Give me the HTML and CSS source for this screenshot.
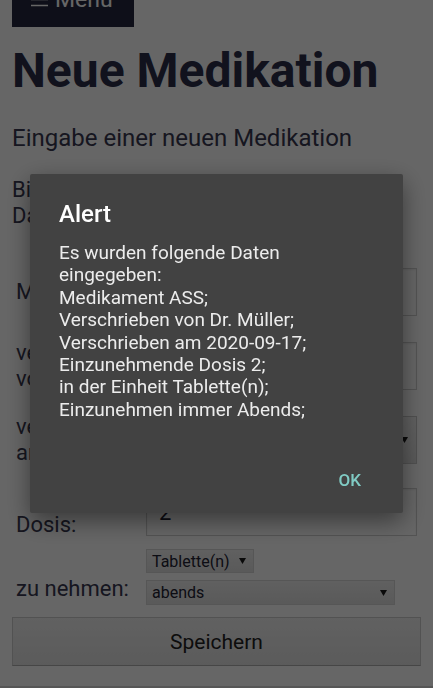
FILE: index.html
```html
<!DOCTYPE html>
<html lang="de">
<head>
<meta charset="utf-8">
<title>Neue Medikation</title>
<link rel="stylesheet" href="styles.css">
</head>
<body>
<div class="page">
  <button class="menu-btn" type="button"><svg class="burger" width="17" height="15" viewBox="0 0 17 15"><path d="M0 1.5H17M0 7.5H17M0 13.5H17" stroke="currentColor" stroke-width="1.6"/></svg>Menu</button>
  <h1 class="title">Neue Medikation</h1>
  <p class="sub">Eingabe einer neuen Medikation</p>
  <p class="intro">Bitte tragen Sie hier alle erforderlichen Daten der neuen Medikation ein.</p>
  <form class="form">
    <label class="lbl">Medikament:</label>
    <input class="text" type="text" value="ASS">
    <label class="lbl">verschrieben von:</label>
    <input class="text" type="text" value="Dr. Müller">
    <label class="lbl">verschrieben am:</label>
    <div class="datebox"><span>2020-09-17</span><svg class="arrow" width="7" height="6" viewBox="0 0 7 6"><path d="M0 0H7L3.5 6Z" fill="currentColor"/></svg></div>
    <label class="lbl lbl-dosis">Dosis:</label>
    <div class="dosis">
      <input class="text text-dosis" type="text" value="2">
      <div class="sel sel-unit"><select><option>Tablette(n)</option></select><svg class="arrow" width="7" height="6" viewBox="0 0 7 6"><path d="M0 0H7L3.5 6Z" fill="currentColor"/></svg></div>
    </div>
    <label class="lbl">zu nehmen:</label>
    <div class="sel sel-time"><select><option>abends</option></select><svg class="arrow" width="7" height="6" viewBox="0 0 7 6"><path d="M0 0H7L3.5 6Z" fill="currentColor"/></svg></div>
  </form>
  <button class="save" type="button">Speichern</button>
  <div class="bottom-line"></div>
</div>

<div class="scrim"></div>
<div class="dialog" role="alertdialog">
  <div class="dlg-title">Alert</div>
  <div class="dlg-msg">Es wurden folgende Daten<br>eingegeben:<br>Medikament ASS;<br>Verschrieben von Dr. Müller;<br>Verschrieben am 2020-09-17;<br>Einzunehmende Dosis 2;<br>in der Einheit Tablette(n);<br>Einzunehmen immer Abends;</div>
  <div class="dlg-actions"><button class="dlg-ok" type="button">OK</button></div>
</div>
</body>
</html>
```
FILE: styles.css
```css
html, body {
  margin: 0;
  padding: 0;
  background: #ffffff;
  font-family: Roboto, "Noto Sans", "Liberation Sans", sans-serif;
  color: #383850;
  overflow: hidden;
}

.page {
  padding: 0 12px;
}

.menu-btn {
  display: block;
  width: 122px;
  margin: -28px 0 0 0;
  padding: 14px 0 14px 19px;
  border: none;
  background: #25273f;
  color: #ffffff;
  font-family: inherit;
  font-size: 23px;
  line-height: 27px;
  text-align: left;
}

.burger {
  vertical-align: baseline;
  margin-right: 7px;
}

.title {
  margin: 16px 0 0 0;
  font-size: 48px;
  line-height: 56px;
  font-weight: 700;
  color: #2c2d4a;
}

.sub {
  margin: 25px 0 0 0;
  font-size: 24px;
  line-height: 28px;
}

.intro {
  margin: 25px 0 0 0;
  font-size: 22px;
  line-height: 26px;
}

.form {
  display: grid;
  grid-template-columns: 134px 271px;
  align-items: center;
  margin-top: 26px;
}

.lbl {
  padding-left: 4px;
  font-size: 22px;
  line-height: 25.8px;
}

.text {
  box-sizing: border-box;
  width: 271px;
  height: 48px;
  margin: 13px 0;
  padding: 0 12px;
  border: 1px solid #cfcfcf;
  background: #ffffff;
  box-shadow: inset 0 1px 2px rgba(0, 0, 0, 0.08);
  font-family: inherit;
  font-size: 22px;
  color: #222233;
}

.datebox {
  box-sizing: border-box;
  height: 48px;
  margin: 13px 0;
  padding: 0 8px 0 12px;
  display: flex;
  align-items: center;
  justify-content: space-between;
  border: 1px solid #c9c9c9;
  background: linear-gradient(#f1f1f1, #dedede);
  font-size: 22px;
  color: #222233;
}

.dosis {
  display: flex;
  flex-direction: column;
  align-items: flex-start;
}

.text-dosis {
  margin: 11px 0 0 0;
}

.sel {
  box-sizing: border-box;
  display: flex;
  align-items: center;
  height: 25px;
  padding-right: 7px;
  border: 1px solid #d6d6d6;
  background: linear-gradient(#f0f0f0, #e0e0e0);
  color: #222233;
}

.sel select {
  flex: 1;
  appearance: none;
  -webkit-appearance: none;
  border: none;
  background: transparent;
  padding: 0 0 0 5px;
  font-family: inherit;
  font-size: 16px;
  color: #222233;
}

.sel-unit {
  width: 108px;
  height: 24px;
  margin-top: 13px;
}

.sel-time {
  width: 249px;
  margin-top: 7px;
}

.arrow {
  flex: none;
  color: #1a1a1a;
}

.save {
  box-sizing: border-box;
  display: block;
  width: 409px;
  height: 49px;
  margin-top: 12px;
  border: 1px solid #cccccc;
  border-bottom-color: #b0b0b0;
  background: linear-gradient(#f2f2f2, #e4e4e4);
  font-family: inherit;
  font-size: 21px;
  color: #222222;
}

.bottom-line {
  margin: 20px -12px 0;
  height: 2px;
  background: #d8d8d8;
}

.scrim {
  position: fixed;
  inset: 0;
  background: rgba(0, 0, 0, 0.6);
}

.dialog {
  position: fixed;
  left: 30px;
  top: 174px;
  width: 373px;
  height: 339px;
  box-sizing: border-box;
  display: flex;
  flex-direction: column;
  padding: 26px 0 12px 29px;
  background: #424242;
  border-radius: 2px;
  box-shadow: 0 8px 24px rgba(0, 0, 0, 0.45);
}

.dlg-title {
  font-size: 24px;
  line-height: 28px;
  font-weight: 500;
  color: #ffffff;
}

.dlg-msg {
  margin-top: 14px;
  font-size: 19px;
  line-height: 22.4px;
  color: #ececec;
}

.dlg-actions {
  margin-top: auto;
  display: flex;
  justify-content: flex-end;
  padding-right: 23px;
}

.dlg-ok {
  height: 43px;
  padding: 0 19px;
  border: none;
  background: transparent;
  font-family: inherit;
  font-size: 17px;
  font-weight: 500;
  color: #80cbc4;
}
```
